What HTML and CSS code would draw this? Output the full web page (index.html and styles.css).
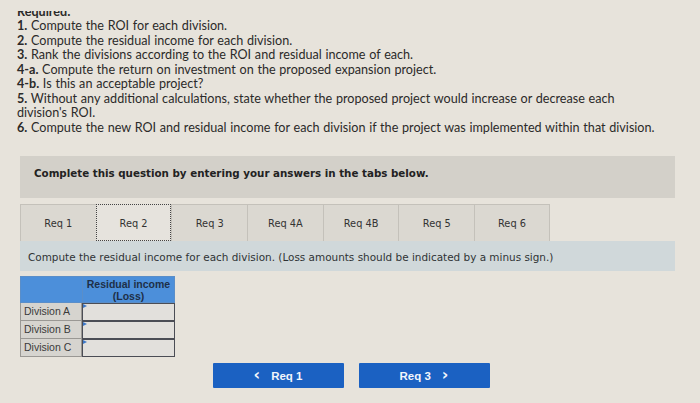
FILE: index.html
```html
<!DOCTYPE html>
<html>
<head>
<meta charset="utf-8">
<link rel="stylesheet" href="styles.css">
</head>
<body>
<div class="page">
  <div class="instructions">
    <div class="req-clip"><span>Required:</span></div>
    <p><b>1.</b> Compute the ROI for each division.</p>
    <p><b>2.</b> Compute the residual income for each division.</p>
    <p><b>3.</b> Rank the divisions according to the ROI and residual income of each.</p>
    <p><b>4-a.</b> Compute the return on investment on the proposed expansion project.</p>
    <p><b>4-b.</b> Is this an acceptable project?</p>
    <p><b>5.</b> Without any additional calculations, state whether the proposed project would increase or decrease each<br>division's ROI.</p>
    <p><b>6.</b> Compute the new ROI and residual income for each division if the project was implemented within that division.</p>
  </div>

  <div class="card">
    <div class="banner">Complete this question by entering your answers in the tabs below.</div>
    <div class="tabs">
      <div class="tab">Req 1</div>
      <div class="tab active">Req 2</div>
      <div class="tab">Req 3</div>
      <div class="tab">Req 4A</div>
      <div class="tab">Req 4B</div>
      <div class="tab">Req 5</div>
      <div class="tab">Req 6</div>
    </div>
    <div class="prompt">Compute the residual income for each division. (Loss amounts should be indicated by a minus sign.)</div>

    <div class="grid">
      <div class="cell hblank"></div>
      <div class="cell head">Residual income<br>(Loss)</div>
      <div class="cell label">Division A</div>
      <div class="cell input"><span class="flag"></span></div>
      <div class="cell label">Division B</div>
      <div class="cell input"><span class="flag"></span></div>
      <div class="cell label">Division C</div>
      <div class="cell input"><span class="flag"></span></div>
    </div>

    <div class="nav">
      <div class="btn"><span class="chev">&lsaquo;</span>Req 1</div>
      <div class="btn">Req 3<span class="chev right">&rsaquo;</span></div>
    </div>
  </div>
</div>
</body>
</html>
```

FILE: styles.css
```css
html, body {
  margin: 0;
  padding: 0;
}
body {
  background: #e7e3db;
  width: 700px;
  height: 403px;
  overflow: hidden;
  color: #2b2a29;
}
.page {
  position: relative;
}
.instructions {
  padding-left: 17px;
  font-family: Lato, "Open Sans", sans-serif;
  font-size: 12.6px;
  line-height: 14.5px;
  word-spacing: 0.5px;
}
.instructions p {
  margin: 0;
}
.instructions b {
  font-weight: 700;
}
.req-clip {
  margin-top: 11px;
  height: 8.4px;
  overflow: hidden;
  font-weight: 700;
}
.req-clip span {
  display: block;
  margin-top: -5.6px;
}
.card {
  margin: 21px 25px 0 20px;
  width: 655px;
}
.banner {
  background: #d3d0c9;
  height: 42px;
  box-sizing: border-box;
  padding: 11px 0 0 14px;
  font-family: "DejaVu Sans", Verdana, sans-serif;
  font-weight: 700;
  font-size: 10.3px;
  color: #222;
}
.tabs {
  display: flex;
  margin-top: 6px;
  height: 37px;
}
.tab {
  width: 75.7px;
  box-sizing: border-box;
  background: #dbd8d1;
  border: 1px solid #c4c1ba;
  border-right: none;
  border-bottom: none;
  display: flex;
  align-items: center;
  justify-content: center;
  font-family: "DejaVu Sans", Verdana, sans-serif;
  font-size: 9.8px;
  color: #333;
  padding-top: 1px;
}
.tab:last-child {
  border-right: 1px solid #c4c1ba;
}
.tab.active {
  background: #e6e3dd;
  border: 1px dotted #444;
}
.prompt {
  background: #d0d8da;
  height: 30px;
  box-sizing: border-box;
  padding: 10px 0 0 8px;
  font-family: "DejaVu Sans", Verdana, sans-serif;
  font-size: 10.45px;
  color: #2f3335;
}
.grid {
  display: grid;
  grid-template-columns: 62px 93px;
  grid-template-rows: 27px 18px 18px 18px;
  margin-top: 5px;
  width: 155px;
  font-family: "Liberation Sans", Arial, sans-serif;
  font-size: 10.5px;
}
.cell {
  box-sizing: border-box;
  position: relative;
}
.hblank {
  background: #4c8fda;
  border: 1px solid #5a8ec9;
  border-right: none;
}
.head {
  background: #4c8fda;
  border: 1px solid #5a8ec9;
  font-weight: 700;
  color: #1e2f48;
  line-height: 12px;
  text-align: center;
  padding-top: 1px;
}
.label {
  background: #d6d4cf;
  border: 1px solid #9a9894;
  border-top: none;
  color: #3a3a3a;
  padding-left: 3px;
  line-height: 17px;
}
.input {
  background: #e2e0dc;
  border: 1.5px solid #4b4d55;
  border-top-width: 1px;
}
.flag {
  position: absolute;
  left: 0;
  top: 0;
  width: 0;
  height: 0;
  border-top: 2.5px solid transparent;
  border-bottom: 2.5px solid transparent;
  border-left: 4px solid #3d78c8;
}
.nav {
  display: flex;
  justify-content: center;
  gap: 15px;
  margin-top: 6px;
  padding-left: 7px;
}
.btn {
  width: 131px;
  height: 25px;
  background: #1b61c2;
  border-radius: 1px;
  color: #f2f5fb;
  font-family: "Liberation Sans", Arial, sans-serif;
  font-weight: 700;
  font-size: 11.5px;
  display: flex;
  align-items: center;
  justify-content: center;
}
.chev {
  font-family: "DejaVu Sans", sans-serif;
  font-size: 16px;
  font-weight: 700;
  margin-right: 11px;
  line-height: 1;
  margin-top: -2px;
}
.chev.right {
  margin-right: 0;
  margin-left: 11px;
}
```
